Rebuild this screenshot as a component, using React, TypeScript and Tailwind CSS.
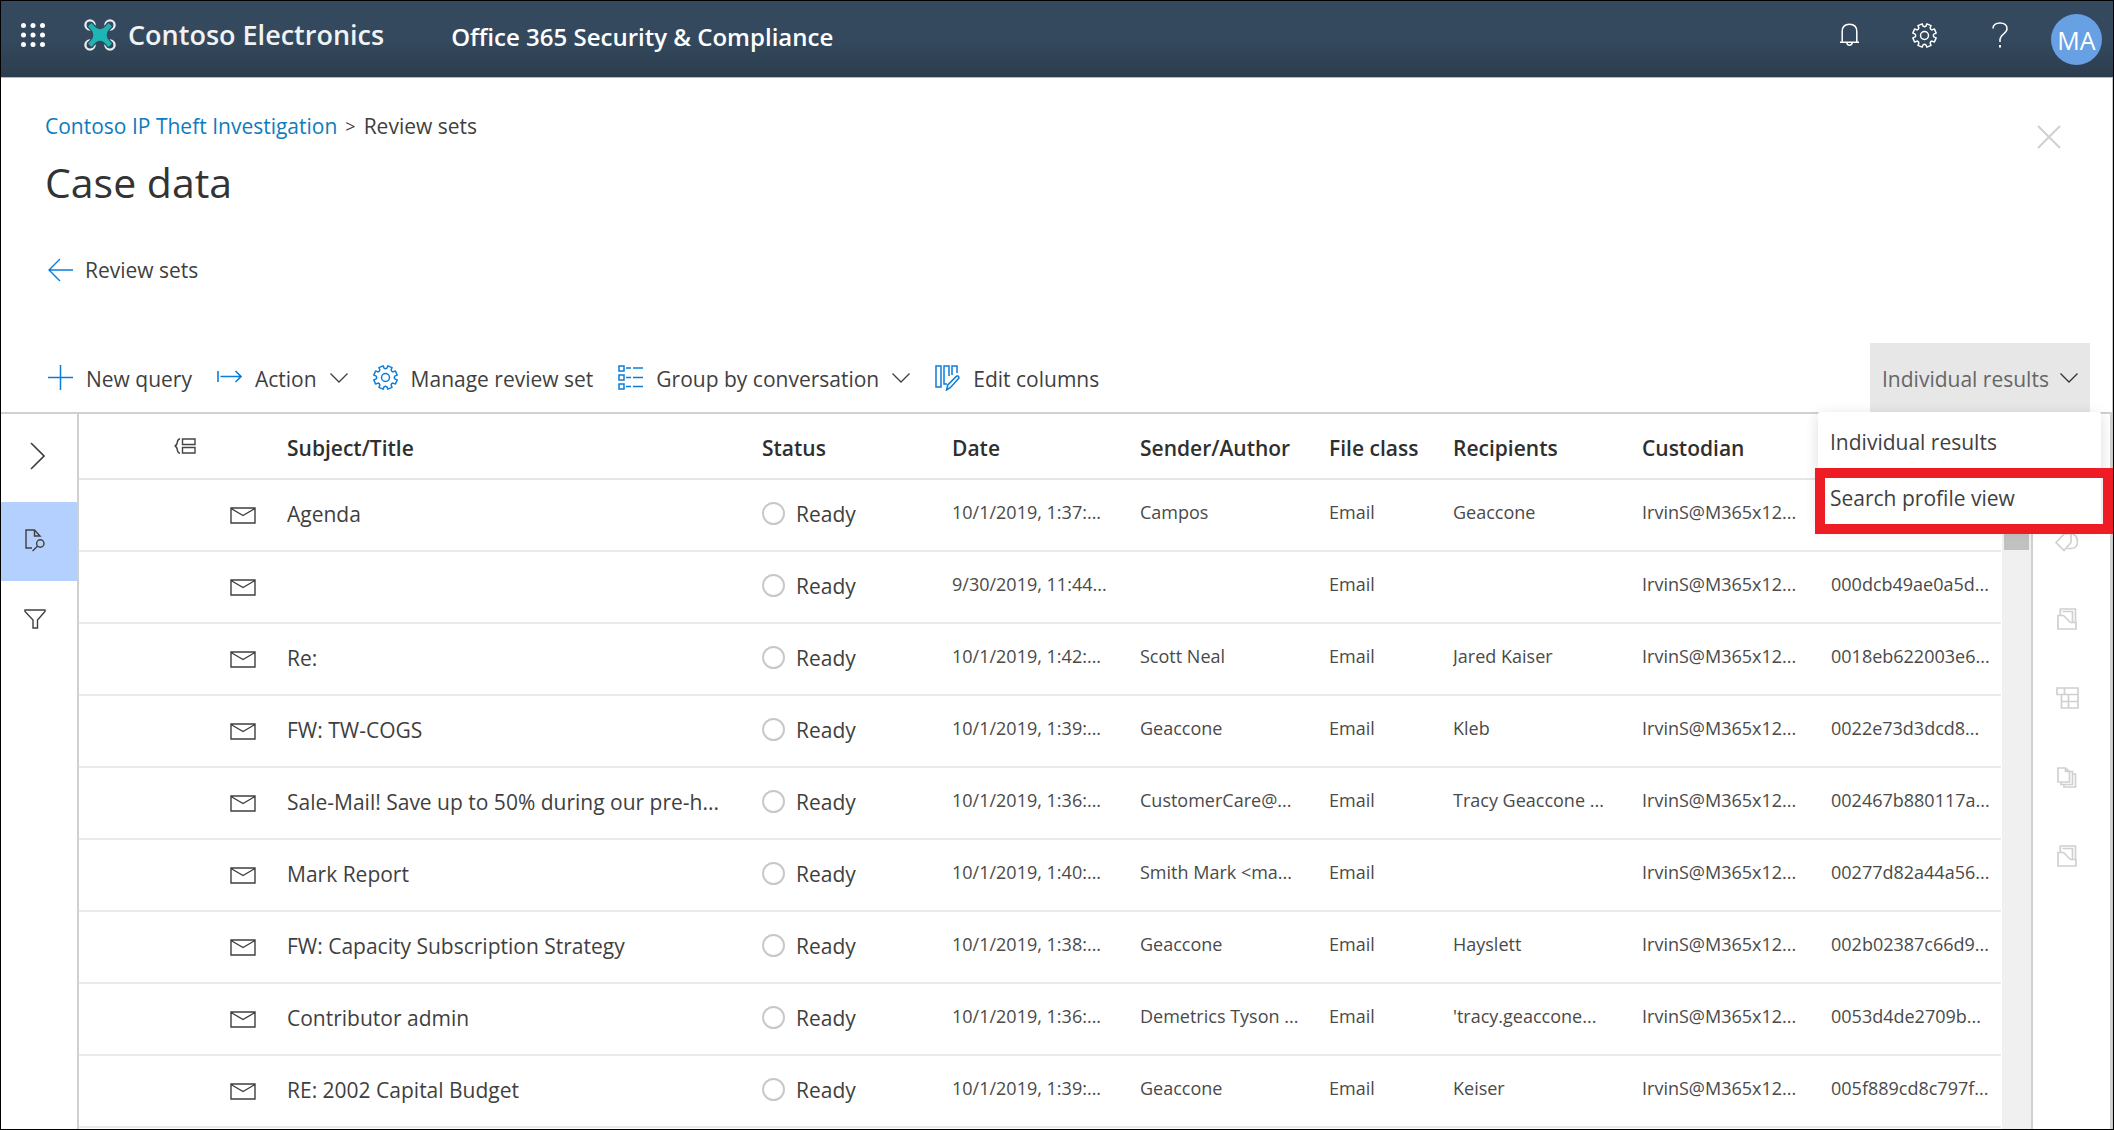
import type { ReactNode } from "react";

type IconProps = { className?: string };

const gearPath = (() => {
  const c = 12.5;
  const pt = (r: number, deg: number) => {
    const a = (deg * Math.PI) / 180;
    return `${(c + r * Math.cos(a)).toFixed(2)} ${(c + r * Math.sin(a)).toFixed(2)}`;
  };
  let d = "";
  for (let i = 0; i < 8; i++) {
    const m = i * 45 + 22.5;
    d += `${i === 0 ? "M" : "L"}${pt(9.4, m - 14)}L${pt(11.9, m - 11)}L${pt(11.9, m + 11)}L${pt(9.4, m + 14)}`;
    d += `Q${pt(8.4, m + 22.5)} ${pt(9.4, m + 31)}`;
  }
  return d + "Z";
})();

function Svg({ w, h, className, sw = 1, children }: { w: number; h: number; className?: string; sw?: number; children: ReactNode }) {
  return (
    <svg width={w} height={h} viewBox={`0 0 ${w} ${h}`} fill="none" stroke="currentColor" strokeWidth={sw} className={`shrink-0 ${className ?? ""}`} aria-hidden="true">
      {children}
    </svg>
  );
}

const GearIcon = ({ className }: IconProps) => (
  <Svg w={25} h={25} sw={1.5} className={className}>
    <path d={gearPath} strokeLinejoin="round" />
    <circle cx="12.5" cy="12.5" r="4" />
  </Svg>
);

const WaffleIcon = () => (
  <Svg w={24} h={24}>
    {[2.5, 12, 21.5].map((y) => [2.5, 12, 21.5].map((x) => <circle key={`${x}-${y}`} cx={x} cy={y} r="2.5" fill="currentColor" stroke="none" />))}
  </Svg>
);

const DroneLogo = () => (
  <Svg w={32} h={32}>
    <g stroke="#e9edf0" strokeWidth="2.3">
      <circle cx="6" cy="6" r="4.6" />
      <circle cx="26" cy="6" r="4.6" />
      <circle cx="6" cy="26" r="4.6" />
      <circle cx="26" cy="26" r="4.6" />
    </g>
    <path
      d="M7.5 5Q16 17 24.500 5L27 7.500Q17 16 27 24.500L24.500 27Q16 15 7.500 27L5 24.500Q15 16 5 7.500Z"
      fill="#33485c"
      stroke="#33485c"
      strokeWidth="4"
      strokeLinejoin="round"
    />
    <path
      d="M7.5 5Q16 17 24.500 5L27 7.500Q17 16 27 24.500L24.500 27Q16 15 7.500 27L5 24.500Q15 16 5 7.500Z"
      fill="#1fb5b5"
      stroke="#1fb5b5"
      strokeWidth="1.4"
      strokeLinejoin="round"
    />
  </Svg>
);

const BellIcon = () => (
  <Svg w={19} h={24} sw={1.5}>
    <path d="M0 19.200H19M2.200 19V8.500C2.200 4 5 1.200 9.500 1.200S16.800 4 16.800 8.500V19M6.800 19.500C7 23 12 23 12.200 19.500" />
  </Svg>
);

const HelpIcon = () => (
  <Svg w={16} h={26} sw={1.5}>
    <path d="M1 6.500C1 2.800 4 .9 8 .9S15 3 15 6.700C15 11.500 8 12.500 8 17.500V20" />
    <path d="M8 23V25.500" strokeWidth="2" />
  </Svg>
);

const CloseIcon = () => (
  <Svg w={24} h={24} sw={2}>
    <path d="M1 1L23 23M23 1L1 23" />
  </Svg>
);

const BackIcon = () => (
  <Svg w={25} h={24} sw={1.4} className="text-[#0a7ddb]">
    <path d="M12 1L1 12L12 23M1 12H25" />
  </Svg>
);

const PlusIcon = () => (
  <Svg w={25} h={25} sw={1.5}>
    <path d="M12.500 0V25M0 12.500H25" />
  </Svg>
);

const ActionIcon = () => (
  <Svg w={25} h={25} sw={1.6}>
    <path d="M1 6V17M3.500 11.500H24M18.500 6L24 11.500L18.500 17" />
  </Svg>
);

const GroupIcon = () => (
  <Svg w={25} h={25} sw={1.5}>
    <path d="M1 1H6V6H1ZM1 10H6V15H1ZM1 19H6V24H1Z" />
    <path d="M8 3H13M15 3H25M8 12.500H13M15 12.500H25M8 21.500H13M15 21.500H25" />
  </Svg>
);

const EditColumnsIcon = () => (
  <Svg w={25} h={27} sw={1.5}>
    <path d="M1 2H6V23H1ZM9 14V2H14V12M9 14V20H12M17 11V2H22V9" />
    <path d="M11.500 26L12.800 21L21.500 12.200Q23.800 11.200 24 14L15.500 23.500Z" />
  </Svg>
);

const ChevronDown = ({ className }: IconProps) => (
  <Svg w={18} h={10} sw={1.3} className={className}>
    <path d="M.5 .5L9 9L17.500 .5" />
  </Svg>
);

const ExpandIcon = () => (
  <Svg w={15} h={28} sw={1.6}>
    <path d="M1 1L14 14L1 27" />
  </Svg>
);

const DocSearchIcon = () => (
  <Svg w={20} h={23} sw={1.4}>
    <path d="M7 19H1V1H9.500L15 7H9.500V1" />
    <circle cx="15.300" cy="14.500" r="3.700" />
    <path d="M12.500 17.300L7.500 22" />
  </Svg>
);

const FilterIcon = () => (
  <Svg w={22} h={21} sw={1.4}>
    <path d="M1 1H21V2.500L13.500 11V19H9V11L1 2.500Z" />
  </Svg>
);

const GroupHeaderIcon = () => (
  <Svg w={22} h={16} sw={1.4}>
    <path d="M8.500 1H21V6.500H8.500ZM8.500 9.500H21V15H8.500ZM6 .7C1.500 1.500 5 7 .7 8C5 9 1.500 14.500 6 15.300" />
  </Svg>
);

const MailIcon = () => (
  <Svg w={26} h={17} sw={1.4}>
    <path d="M1 1H25V16H1ZM1 1.500L13 8.500L25 1.500" />
  </Svg>
);

const TagIcon = () => (
  <Svg w={24} h={24} sw={1.6}>
    <path d="M1 14.500L9 6L16 5.500V14.500L9 22.500Z" />
    <path d="M14 5Q22.500 6 22.500 13.500T15 20.500H12" />
  </Svg>
);

const FolderIcon = () => (
  <Svg w={20} h={22} sw={1.7}>
    <path d="M1 7.500H6.500L13.500 14.500H19V21H1ZM3.300 7V1H18.500V14.500M5.500 3.500H15.500V14" />
  </Svg>
);

const GridIcon = () => (
  <Svg w={23} h={22} sw={1.7}>
    <path d="M1 1H22V21H5.500V7.500H1ZM8.500 1V7.500M5.500 7.500H22M5.500 14.500H22M12.500 7.500V21" />
  </Svg>
);

const PagesIcon = () => (
  <Svg w={20} h={21} sw={1.7}>
    <path d="M1 1H8.500L12.500 4.500V15H1ZM8.500 1V4.500H12.500M4 15V17.500H15.500V4.500H13M7 17.500V20H18.500V7H16" />
  </Svg>
);

type Row = { subject: string; date: string; sender: string; recipients: string; hash: string };

const rows: Row[] = [
  { subject: "Agenda", date: "10/1/2019, 1:37:...", sender: "Campos", recipients: "Geaccone", hash: "" },
  { subject: "", date: "9/30/2019, 11:44...", sender: "", recipients: "", hash: "000dcb49ae0a5d..." },
  { subject: "Re:", date: "10/1/2019, 1:42:...", sender: "Scott Neal", recipients: "Jared Kaiser", hash: "0018eb622003e6..." },
  { subject: "FW: TW-COGS", date: "10/1/2019, 1:39:...", sender: "Geaccone", recipients: "Kleb", hash: "0022e73d3dcd8..." },
  { subject: "Sale-Mail! Save up to 50% during our pre-h...", date: "10/1/2019, 1:36:...", sender: "CustomerCare@...", recipients: "Tracy Geaccone ...", hash: "002467b880117a..." },
  { subject: "Mark Report", date: "10/1/2019, 1:40:...", sender: "Smith Mark <ma...", recipients: "", hash: "00277d82a44a56..." },
  { subject: "FW: Capacity Subscription Strategy", date: "10/1/2019, 1:38:...", sender: "Geaccone", recipients: "Hayslett", hash: "002b02387c66d9..." },
  { subject: "Contributor admin", date: "10/1/2019, 1:36:...", sender: "Demetrics Tyson ...", recipients: "'tracy.geaccone...", hash: "0053d4de2709b..." },
  { subject: "RE: 2002 Capital Budget", date: "10/1/2019, 1:39:...", sender: "Geaccone", recipients: "Keiser", hash: "005f889cd8c797f..." },
];

function SuiteHeader() {
  return (
    <header className="flex h-[77px] items-center justify-between border-b border-[#b4b9be] bg-linear-to-b from-[#34495e] from-50% to-[#2c3d4e] pr-[11px] pl-5 text-white">
      <div className="flex items-center pb-2">
        <button type="button" aria-label="App launcher"><WaffleIcon /></button>
        <div className="ml-[39px] flex items-center gap-3">
          <DroneLogo />
          <span className="text-[27px] leading-9 font-semibold text-[#f0f2f4]">Contoso Electronics</span>
        </div>
        <span className="ml-[67px] pt-1 text-2xl font-semibold">Office 365 Security &amp; Compliance</span>
      </div>
      <div className="flex items-center">
        <div className="flex items-center pb-2">
          <button type="button" aria-label="Notifications" className="flex w-[75px] justify-center"><BellIcon /></button>
          <button type="button" aria-label="Settings" className="flex w-[75px] justify-center"><GearIcon /></button>
          <button type="button" aria-label="Help" className="flex w-[75px] justify-center"><HelpIcon /></button>
        </div>
        <button type="button" aria-label="Account" className="ml-[14px] flex size-[51px] items-center justify-center rounded-full bg-[#68a0e4] pt-0.5 text-[25px]">MA</button>
      </div>
    </header>
  );
}

function ToolButton({ icon, label, menu = false }: { icon: ReactNode; label: string; menu?: boolean }) {
  return (
    <button type="button" className="flex items-center gap-[13px] whitespace-nowrap">
      <span className="text-[#0a7ddb]">{icon}</span>
      <span className="pt-[3px]">{label}</span>
      {menu && <ChevronDown />}
    </button>
  );
}

function Toolbar() {
  return (
    <div className="flex h-[71px] border-b-2 border-[#d0d0d0] pr-[22px] pl-[47px]">
      <div role="toolbar" aria-label="Review set commands" className="flex flex-1 gap-[25px]">
        <ToolButton icon={<PlusIcon />} label="New query" />
        <ToolButton icon={<ActionIcon />} label="Action" menu />
        <ToolButton icon={<GearIcon />} label="Manage review set" />
        <ToolButton icon={<GroupIcon />} label="Group by conversation" menu />
        <ToolButton icon={<EditColumnsIcon />} label="Edit columns" />
      </div>
      <div className="relative">
        <button type="button" aria-expanded="true" aria-haspopup="menu" className="flex h-full w-[220px] items-center justify-between bg-[#e7e7e7] px-3 text-[#666]">
          <span className="pt-[3px]">Individual results</span>
          <ChevronDown className="text-[#333]" />
        </button>
        <div role="menu" className="absolute top-full -right-[11px] z-10 w-[283px] rounded-xs bg-white pt-0.5 shadow-[0_3px_14px_rgba(0,0,0,0.14)]">
          <button type="button" role="menuitem" className="flex h-14 w-full items-center pl-3">Individual results</button>
          <button type="button" role="menuitem" className="relative flex h-14 w-full items-center pl-3">
            Search profile view
            <span className="absolute -top-0.5 -right-3 -left-[3px] h-[66px] border-10 border-[#ee1c25]" />
          </button>
        </div>
      </div>
    </div>
  );
}

const th = "border-b-2 border-[#e6e6e6] p-0 pt-1 text-left font-semibold text-[#2f2f2f]";
const td = "overflow-hidden border-b-2 border-[#ebebeb] p-0";
const small = "overflow-hidden border-b-2 border-[#ebebeb] p-0 pb-[7px] text-lg text-[#4a4a4a]";

function ResultsTable() {
  return (
    <table className="w-full table-fixed border-separate border-spacing-0 whitespace-nowrap">
      <colgroup>
        <col className="w-[151px]" />
        <col className="w-[57px]" />
        <col />
        <col className="w-[190px]" />
        <col className="w-[188px]" />
        <col className="w-[189px]" />
        <col className="w-[124px]" />
        <col className="w-[189px]" />
        <col className="w-[189px]" />
        <col className="w-[170px]" />
      </colgroup>
      <thead>
        <tr className="h-[66px]">
          <th scope="col" className={th}><span className="flex pb-1 pl-[95px] text-[#444]"><GroupHeaderIcon /></span></th>
          <th scope="col" className={th} aria-label="Type" />
          <th scope="col" className={th}>Subject/Title</th>
          <th scope="col" className={th}>Status</th>
          <th scope="col" className={th}>Date</th>
          <th scope="col" className={th}>Sender/Author</th>
          <th scope="col" className={th}>File class</th>
          <th scope="col" className={th}>Recipients</th>
          <th scope="col" className={th}>Custodian</th>
          <th scope="col" className={th} aria-label="Identifier" />
        </tr>
      </thead>
      <tbody>
        {rows.map((r) => (
          <tr key={r.subject + r.hash} className="h-[72px]">
            <td className={td} />
            <td className={td}><MailIcon /></td>
            <td className={td}><div className="pb-[3px]">{r.subject}</div></td>
            <td className={td}>
              <div className="flex items-center gap-[11px] pb-[3px]">
                <span className="size-[23px] rounded-full border-2 border-[#c8c8c8]" />
                <span>Ready</span>
              </div>
            </td>
            <td className={small}>{r.date}</td>
            <td className={small}>{r.sender}</td>
            <td className={small}>Email</td>
            <td className={small}>{r.recipients}</td>
            <td className={small}>IrvinS@M365x12...</td>
            <td className={small}>{r.hash}</td>
          </tr>
        ))}
      </tbody>
    </table>
  );
}

const railButton = "flex h-[79px] w-full items-center justify-center pr-[9px] pb-[3px]";

export default function App() {
  return (
    <div className="flex min-h-screen flex-col border border-black bg-white font-['Open_Sans',sans-serif] text-[21px] leading-7 text-[#3f3f3f]">
      <SuiteHeader />
      <main className="flex flex-1 flex-col border-r border-[#c4c4c4]">
        <div className="flex items-start justify-between pt-[34px] pr-[51px] pb-[59px] pl-11">
          <div>
            <nav aria-label="Breadcrumb" className="flex gap-2">
              <a href="#case" className="text-[#0f7bbd]">Contoso IP Theft Investigation</a>
              <span className="text-lg leading-7">&gt;</span>
              <span>Review sets</span>
            </nav>
            <h1 className="mt-[14px] text-[41px] leading-[56px] text-[#333]">Case data</h1>
            <a href="#review-sets" className="mt-[46px] flex items-center gap-3 pl-[3px]">
              <BackIcon />
              Review sets
            </a>
          </div>
          <button type="button" aria-label="Close" className="mt-[13px] text-[#d0d0d0]"><CloseIcon /></button>
        </div>
        <Toolbar />
        <div className="flex flex-1">
          <nav aria-label="Panels" className="w-[78px] shrink-0 border-r-2 border-[#d0d0d0]">
            <button type="button" aria-label="Expand" className="flex h-[88px] w-full items-center justify-center pr-1 pb-1"><ExpandIcon /></button>
            <button type="button" aria-label="Search documents" className={`${railButton} bg-[#b4d0ff]`}><DocSearchIcon /></button>
            <button type="button" aria-label="Filter" className={railButton}><FilterIcon /></button>
          </nav>
          <div className="min-w-0 flex-1 pr-px">
            <ResultsTable />
          </div>
          <div className="w-[29px] shrink-0 bg-[#f0f0f0] px-0.5 pt-[26px]">
            <div className="h-[110px] bg-[#c1c1c1]" />
          </div>
          <aside aria-label="Tools" className="w-[81px] shrink-0 border-x-2 border-[#d0d0d0] pt-[88px] text-[#d0d0d0]">
            <button type="button" aria-label="Tag" className={railButton}><TagIcon /></button>
            <button type="button" aria-label="Add to folder" className={railButton}><FolderIcon /></button>
            <button type="button" aria-label="Metadata" className={railButton}><GridIcon /></button>
            <button type="button" aria-label="Copies" className={railButton}><PagesIcon /></button>
            <button type="button" aria-label="Archive" className={railButton}><FolderIcon /></button>
          </aside>
        </div>
      </main>
    </div>
  );
}
